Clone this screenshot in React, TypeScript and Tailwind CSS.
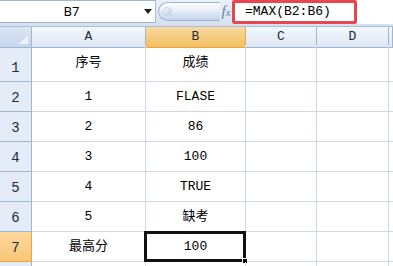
import React from 'react';

const mono = { fontFamily: '"Liberation Mono", "Noto Sans CJK SC", monospace' };

const cols = ['A', 'B', 'C', 'D', ''];
const rows = [
  { n: 1, a: '序号', b: '成绩', h: 'h-[37px]' },
  { n: 2, a: '1', b: 'FLASE', h: 'h-[30px]' },
  { n: 3, a: '2', b: '86', h: 'h-[30px]' },
  { n: 4, a: '3', b: '100', h: 'h-[30px]' },
  { n: 5, a: '4', b: 'TRUE', h: 'h-[30px]' },
  { n: 6, a: '5', b: '缺考', h: 'h-[30px]' },
  { n: 7, a: '最高分', b: '100', h: 'h-[30px]' },
  { n: 8, a: '', b: '', h: 'h-[30px]' },
];

function FormulaBar() {
  return (
    <div className="flex h-[27px] bg-gradient-to-b from-[#e9f0f9] to-[#d5e1f0] border-b border-[#a9bfd6]">
      <div className="flex w-[156px] h-[23px] bg-white border-t border-b border-r border-[#a3b8d1]">
        <div className="flex-1 flex items-center justify-center text-[13px] text-black pl-[2px]">B7</div>
        <div className="w-[14px] flex items-center justify-center">
          <svg width="8" height="5" viewBox="0 0 8 5"><path d="M0 0h8L4 5z" fill="#222" /></svg>
        </div>
      </div>
      <div className="ml-[2px] mt-[2px] h-[19px] w-[62px] rounded-l-full border border-r-0 border-[#9fb4cd] bg-gradient-to-b from-[#ffffff] via-[#e2ebf6] to-[#c4d4e8] flex items-center pl-[4px]">
        <div className="w-[9px] h-[9px] rounded-full bg-gradient-to-br from-white to-[#b8c8dc] border border-[#c8d5e5]" />
      </div>
      <div className="w-[12px] flex items-center justify-center italic text-[#6b7f99]" style={{ fontFamily: '"Liberation Serif", serif' }}>
        <span className="-mt-[3px] text-[15px] leading-none">f<span className="text-[11px]">x</span></span>
      </div>
      <div className="flex-1 h-[24px] bg-white relative">
        <div className="absolute left-0 top-0 w-[125px] h-[24px] border-[3px] border-[#e8474f] rounded-[2px]" />
        <div className="h-full flex items-center pl-[13px] text-[13px] text-black" style={mono}>=MAX(B2:B6)</div>
      </div>
    </div>
  );
}

function Sheet() {
  const grid = 'grid grid-cols-[32px_114px_100px_71px_72px_4px]';
  return (
    <div className="bg-white">
      <div className={`${grid} h-[18px]`}>
        <div className="bg-gradient-to-b from-[#dce6f4] to-[#c6d6ec] border-r border-b border-[#9eb6ce] relative">
          <svg className="absolute right-[3px] bottom-[3px]" width="9" height="9" viewBox="0 0 9 9"><path d="M9 0V9H0z" fill="#eef3fa" /></svg>
        </div>
        {cols.map((c) => (
          <div
            key={c || 'x'}
            className={`flex items-center justify-center text-[13px] border-r border-b ${
              c === 'B'
                ? 'bg-gradient-to-b from-[#f9d9a0] to-[#f1c05e] border-[#f2a33d]'
                : 'bg-gradient-to-b from-[#f3f7fc] to-[#dde7f3] border-[#9eb6ce]'
            } text-[#1c2a3c]`}
            style={mono}
          >
            {c}
          </div>
        ))}
      </div>
      {rows.map((r) => (
        <div key={r.n} className={`${grid} ${r.h}`}>
          <div
            className={`flex items-end justify-center pb-[2px] text-[14px] border-r border-b ${
              r.n === 7
                ? 'bg-gradient-to-b from-[#fcd99d] to-[#f7c776] border-[#f2a33d]'
                : 'bg-[#e4ecf7] border-[#9eb6ce]'
            } text-[#1c2a3c]`}
            style={mono}
          >
            {r.n < 8 ? r.n : ''}
          </div>
          <div className="flex items-center justify-center text-[13px] border-r border-b border-[#d0d7e5] text-black" style={mono}>
            {r.a}
          </div>
          <div className="relative flex items-center justify-center text-[13px] border-r border-b border-[#d0d7e5] text-black" style={mono}>
            {r.b}
            {r.n === 7 && (
              <>
                <div className="absolute -left-[2px] -top-[1px] -right-[1px] -bottom-[1px] border-[3px] border-[#111]" />
                <div className="absolute -right-[3px] -bottom-[3px] w-[6px] h-[6px] bg-black border border-white" />
              </>
            )}
          </div>
          <div className="border-r border-b border-[#d0d7e5]" />
          <div className="border-r border-b border-[#d0d7e5]" />
          <div className="border-b border-[#d0d7e5]" />
        </div>
      ))}
    </div>
  );
}

export default function App() {
  return (
    <div className="w-[393px] h-[266px] overflow-hidden bg-white">
      <FormulaBar />
      <Sheet />
    </div>
  );
}
